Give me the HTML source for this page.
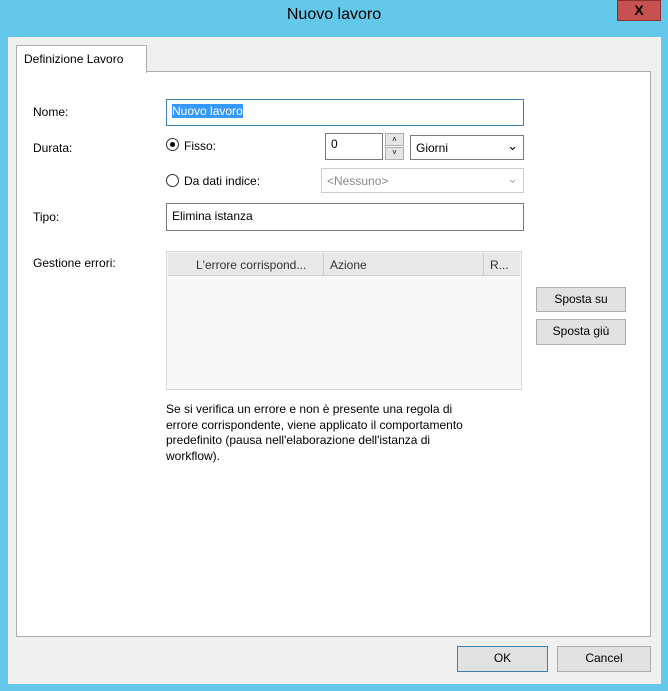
<!DOCTYPE html><html><head><style>
body{margin:0;width:668px;height:691px;background:#63c8ea;font-family:"Liberation Sans",sans-serif;font-size:12px;color:#000;position:relative;overflow:hidden}
.a{position:absolute;box-sizing:border-box}
.in{background:#fff;border:1px solid #7a7a7a;padding:3px 5px}
.btn{background:#e1e1e1;border:1px solid #adadad;text-align:center;line-height:22px}
</style></head><body>
<div class="a" style="left:0;top:6px;width:668px;text-align:center;font-size:16px;color:#000">Nuovo lavoro</div>
<div class="a" style="left:617px;top:0;width:44px;height:21px;background:#c75050;border:1px solid #8a3030;color:#000;font-weight:bold;text-align:center;line-height:19px;font-size:14px">X</div>
<div class="a" style="left:8px;top:37px;width:653px;height:647px;background:#f0f0f0"></div>
<div class="a" style="left:16px;top:71px;width:635px;height:566px;background:#fff;border:1px solid #adadad"></div>
<div class="a" style="left:16px;top:45px;width:131px;height:28px;background:#fff;border:1px solid #adadad;border-bottom:none;padding:6px 0 0 7px">Definizione Lavoro</div>
<div class="a" style="left:33px;top:105px">Nome:</div>
<div class="a in" style="left:166px;top:99px;width:358px;height:27px;border-color:#3c7fb1;padding:4px 5px"><span style="background:#3399ff;color:#fff">Nuovo lavoro</span></div>
<div class="a" style="left:33px;top:141px">Durata:</div>
<div class="a" style="left:166px;top:138px;width:13px;height:13px;border:1px solid #333;border-radius:50%;background:#fff"><div class="a" style="left:3px;top:3px;width:5px;height:5px;border-radius:50%;background:#000"></div></div>
<div class="a" style="left:184px;top:139px">Fisso:</div>
<div class="a in" style="left:325px;top:133px;width:58px;height:27px">0</div>
<div class="a" style="left:385px;top:133px;width:19px;height:13px;background:#e5e5e5;border:1px solid #adadad;font-size:8px;text-align:center;line-height:12px">˄</div>
<div class="a" style="left:385px;top:147px;width:19px;height:13px;background:#e5e5e5;border:1px solid #adadad;font-size:8px;text-align:center;line-height:10px">˅</div>
<div class="a in" style="left:410px;top:135px;width:114px;height:25px;padding:5px">Giorni<span style="position:absolute;right:5px;top:2px;font-size:13px">⌄</span></div>
<div class="a" style="left:166px;top:174px;width:13px;height:13px;border:1px solid #333;border-radius:50%;background:#fff"></div>
<div class="a" style="left:184px;top:174px">Da dati indice:</div>
<div class="a in" style="left:321px;top:168px;width:203px;height:25px;border-color:#ccc;color:#888;padding:5px">&lt;Nessuno&gt;<span style="position:absolute;right:5px;top:2px;font-size:13px;color:#aaa">⌄</span></div>
<div class="a" style="left:33px;top:210px">Tipo:</div>
<div class="a in" style="left:166px;top:203px;width:358px;height:28px;padding:5px">Elimina istanza</div>
<div class="a" style="left:33px;top:256px">Gestione errori:</div>
<div class="a" style="left:166px;top:251px;width:356px;height:139px;background:#f7f7f7;border:1px solid #d4d4d4"></div>
<div class="a" style="left:168px;top:253px;width:352px;height:23px;background:#e8e8e8;border-bottom:1px solid #d0d0d0;color:#333">
<span class="a" style="left:28px;top:5px">L'errore corrispond...</span><span class="a" style="left:155px;top:0;width:1px;height:22px;background:#ccc"></span>
<span class="a" style="left:162px;top:5px">Azione</span><span class="a" style="left:315px;top:0;width:1px;height:22px;background:#ccc"></span><span class="a" style="left:322px;top:5px">R...</span></div>
<div class="a btn" style="left:536px;top:287px;width:90px;height:25px">Sposta su</div>
<div class="a btn" style="left:536px;top:319px;width:90px;height:26px">Sposta giù</div>
<div class="a" style="left:166px;top:402px;width:420px;line-height:15.5px;white-space:nowrap">Se si verifica un errore e non è presente una regola di<br>errore corrispondente, viene applicato il comportamento<br>predefinito (pausa nell'elaborazione dell'istanza di<br>workflow).</div>
<div class="a btn" style="left:457px;top:646px;width:91px;height:26px;border-color:#3c7fb1">OK</div>
<div class="a btn" style="left:557px;top:646px;width:94px;height:26px">Cancel</div>
</body></html>
